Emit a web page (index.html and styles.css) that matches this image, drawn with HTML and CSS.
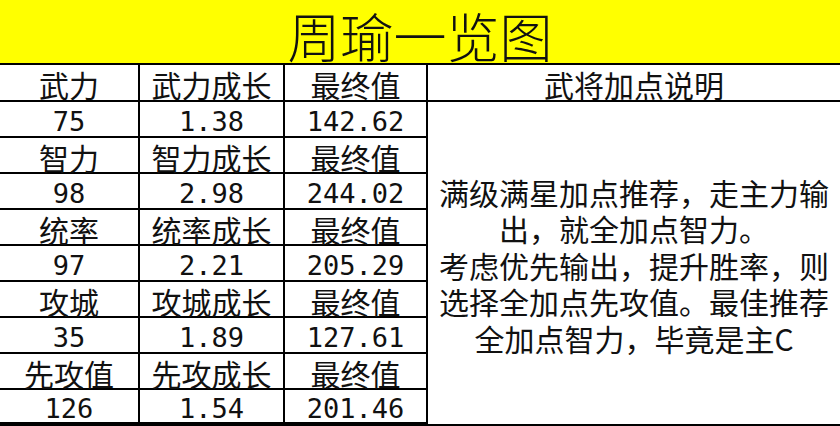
FILE: index.html
```html
<!DOCTYPE html>
<html lang="zh">
<head>
<meta charset="utf-8">
<title>周瑜一览图</title>
<link rel="stylesheet" href="styles.css">
</head>
<body>
<div class="sheet">
  <div class="title">周瑜一览图</div>
  <div class="grid">
    <div class="cell">武力</div>
    <div class="cell">武力成长</div>
    <div class="cell">最终值</div>
    <div class="cell">武将加点说明</div>

    <div class="cell num">75</div>
    <div class="cell num">1.38</div>
    <div class="cell num">142.62</div>
    <div class="cell note">满级满星加点推荐，走主力输<br>出，就全加点智力。<br>考虑优先输出，提升胜率，则<br>选择全加点先攻值。最佳推荐<br>全加点智力，毕竟是主C</div>

    <div class="cell">智力</div>
    <div class="cell">智力成长</div>
    <div class="cell">最终值</div>

    <div class="cell num">98</div>
    <div class="cell num">2.98</div>
    <div class="cell num">244.02</div>

    <div class="cell">统率</div>
    <div class="cell">统率成长</div>
    <div class="cell">最终值</div>

    <div class="cell num">97</div>
    <div class="cell num">2.21</div>
    <div class="cell num">205.29</div>

    <div class="cell">攻城</div>
    <div class="cell">攻城成长</div>
    <div class="cell">最终值</div>

    <div class="cell num">35</div>
    <div class="cell num">1.89</div>
    <div class="cell num">127.61</div>

    <div class="cell">先攻值</div>
    <div class="cell">先攻成长</div>
    <div class="cell">最终值</div>

    <div class="cell num">126</div>
    <div class="cell num">1.54</div>
    <div class="cell num">201.46</div>
  </div>
</div>
</body>
</html>
```

FILE: styles.css
```css
* { box-sizing: border-box; }
html, body {
  margin: 0;
  padding: 0;
  background: #fff;
}
body {
  width: 840px;
  height: 426px;
  overflow: hidden;
  font-family: "Noto Sans CJK SC", "Noto Sans", sans-serif;
  color: #111;
}
.sheet {
  display: flex;
  flex-direction: column;
}
.title {
  height: 63px;
  background: #ffff00;
  display: flex;
  align-items: center;
  justify-content: center;
  font-size: 53px;
  font-weight: 300;
  line-height: 1;
  padding-top: 8px;
}
.grid {
  display: grid;
  grid-template-columns: 138px 143px 141px 1fr;
  grid-template-rows: 35px repeat(8, 34px) 32px;
  gap: 2px;
  background: #000;
  border-top: 2px solid #000;
  border-bottom: 2px solid #000;
}
.cell {
  background: #fff;
  display: flex;
  align-items: center;
  justify-content: center;
  font-size: 30px;
  line-height: 1;
  padding-top: 3px;
  white-space: nowrap;
}
.num {
  font-family: "DejaVu Sans Mono", "Liberation Mono", monospace;
  font-size: 27px;
  padding-top: 4px;
}
.note {
  grid-column: 4;
  grid-row: 2 / 12;
  text-align: center;
  line-height: 36.5px;
  padding-top: 4px;
}
```
